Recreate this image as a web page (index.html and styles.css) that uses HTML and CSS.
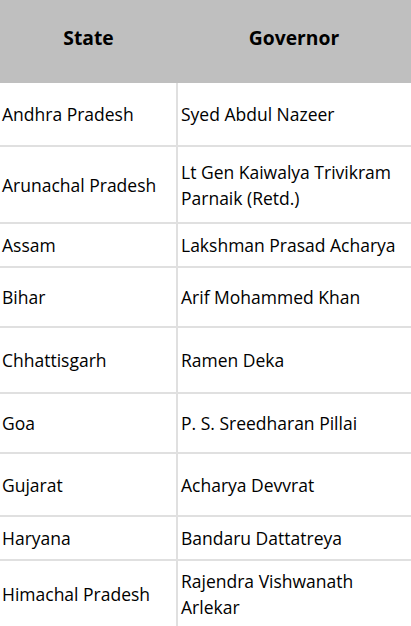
FILE: index.html
```html
<!DOCTYPE html>
<html>
<head>
<meta charset="utf-8">
<link rel="stylesheet" href="styles.css">
</head>
<body>
<table class="gov-table">
  <thead>
    <tr class="head-row">
      <th class="col-state">State</th>
      <th class="col-gov">Governor</th>
    </tr>
  </thead>
  <tbody>
    <tr class="r63"><td>Andhra Pradesh</td><td>Syed Abdul Nazeer</td></tr>
    <tr class="r77"><td>Arunachal Pradesh</td><td>Lt Gen Kaiwalya Trivikram Parnaik (Retd.)</td></tr>
    <tr class="r44"><td>Assam</td><td>Lakshman Prasad Acharya</td></tr>
    <tr class="r60"><td>Bihar</td><td>Arif Mohammed Khan</td></tr>
    <tr class="r66"><td>Chhattisgarh</td><td>Ramen Deka</td></tr>
    <tr class="r60"><td>Goa</td><td>P. S. Sreedharan Pillai</td></tr>
    <tr class="r63"><td>Gujarat</td><td>Acharya Devvrat</td></tr>
    <tr class="r44"><td>Haryana</td><td>Bandaru Dattatreya</td></tr>
    <tr class="r67"><td>Himachal Pradesh</td><td>Rajendra Vishwanath Arlekar</td></tr>
  </tbody>
</table>
</body>
</html>
```
FILE: styles.css
```css
html, body {
  margin: 0;
  padding: 0;
  background: #fff;
}
body {
  font-family: "Open Sans", "Noto Sans", sans-serif;
  color: #000;
  overflow: hidden;
}
.gov-table {
  width: 411px;
  border-collapse: collapse;
  table-layout: fixed;
  font-size: 17.5px;
}
.col-state { width: 177px; }
.head-row {
  background: #bfbfbf;
  height: 83px;
}
.head-row th {
  font-weight: 700;
  font-size: 19.3px;
  text-align: center;
  vertical-align: middle;
  padding: 0 0 9px 0;
}
.gov-table td {
  padding: 0 8px 0 2px;
  vertical-align: middle;
  line-height: 26px;
  border-bottom: 2px solid #e0e0e0;
}
.gov-table td + td {
  border-left: 2px solid #e0e0e0;
  padding-left: 3px;
}
.r44 { height: 44px; }
.r60 { height: 60px; }
.r63 { height: 63px; }
.r66 { height: 66px; }
.r67 { height: 67px; }
.r77 { height: 77px; }
```
